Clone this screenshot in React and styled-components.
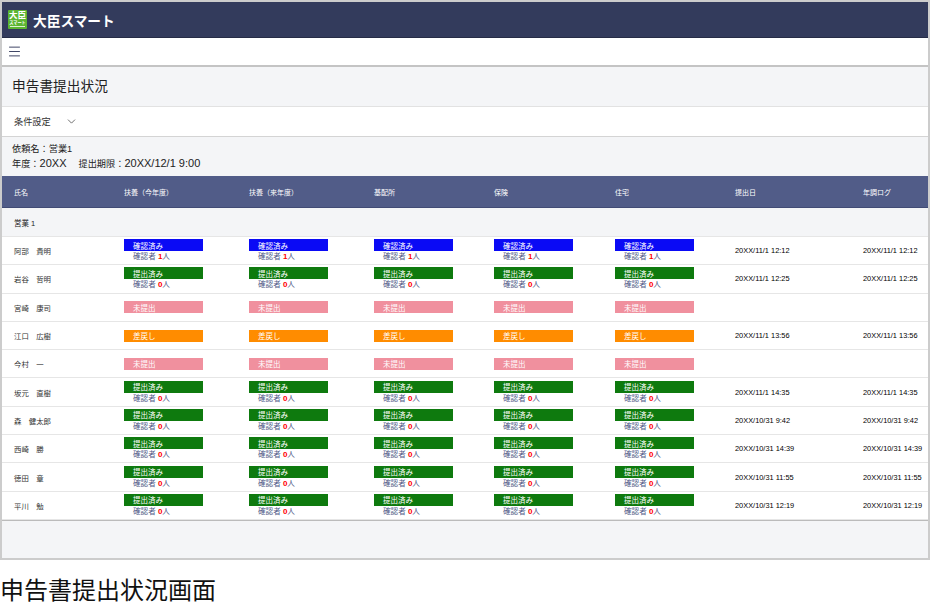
import styled, { createGlobalStyle } from 'styled-components'
import { Menu, ChevronDown } from 'lucide-react'

const GRID = '110px 125px 125px 120px 121px 120px 128px 65px'

const STATUS = {
    done: { label: '確認済み', color: '#0A0AF5', count: 1 },
    sent: { label: '提出済み', color: '#0E7A0E', count: 0 },
    none: { label: '未提出', color: '#F0909E' },
    back: { label: '差戻し', color: '#FF8C00' },
}

const COLUMNS = ['氏名', '扶養（今年度）', '扶養（来年度）', '基配所', '保険', '住宅', '提出日', '年調ログ']

const ROWS = [
    { name: '阿部　貴明', status: 'done', date: '20XX/11/1 12:12' },
    { name: '岩谷　哲明', status: 'sent', date: '20XX/11/1 12:25' },
    { name: '宮崎　康司', status: 'none', date: '' },
    { name: '江口　広樹', status: 'back', date: '20XX/11/1 13:56' },
    { name: '今村　一', status: 'none', date: '' },
    { name: '坂元　直樹', status: 'sent', date: '20XX/11/1 14:35' },
    { name: '森　健太郎', status: 'sent', date: '20XX/10/31 9:42' },
    { name: '西崎　勝', status: 'sent', date: '20XX/10/31 14:39' },
    { name: '徳田　章', status: 'sent', date: '20XX/10/31 11:55' },
    { name: '平川　勉', status: 'sent', date: '20XX/10/31 12:19' },
]

function StatusCell({ status }) {
    const item = STATUS[status]
    return (
        <Cell>
            <Badge color={item.color}>{item.label}</Badge>
            {item.count !== undefined && (
                <Checker>確認者 <Count>{item.count}</Count>人</Checker>
            )}
        </Cell>
    )
}

export default function App() {
    return (
        <>
            <GlobalStyle />
            <Frame>
                <Header>
                    <Logo>
                        <LogoMain>大臣</LogoMain>
                        <LogoSub>スマート</LogoSub>
                        <LogoBar />
                    </Logo>
                    <Brand>大臣スマート</Brand>
                </Header>
                <Nav>
                    <Menu size={15} strokeWidth={1.5} color="#333B5C" />
                </Nav>
                <TitleBar>申告書提出状況</TitleBar>
                <Filter>
                    条件設定
                    <ChevronDown size={13} strokeWidth={1.4} color="#444444" />
                </Filter>
                <Info>
                    <div>依頼名：営業1</div>
                    <div>
                        年度：<Latin>20XX</Latin>
                        <Deadline>提出期限：<Latin>20XX/12/1 9:00</Latin></Deadline>
                    </div>
                </Info>
                <TableHead>
                    {COLUMNS.map((col) => <span key={col}>{col}</span>)}
                </TableHead>
                <GroupRow>営業 1</GroupRow>
                {ROWS.map((row) => (
                    <Row key={row.name}>
                        <Name>{row.name}</Name>
                        {[0, 1, 2, 3, 4].map((i) => <StatusCell key={i} status={row.status} />)}
                        <DateText>{row.date}</DateText>
                        <DateText>{row.date}</DateText>
                    </Row>
                ))}
                <Bottom />
            </Frame>
            <Caption>申告書提出状況画面</Caption>
        </>
    )
}

const GlobalStyle = createGlobalStyle`
    body {
        margin: 0;
        background-color: #FFFFFF;
        overflow: hidden;
        font-family: "Liberation Sans", "Noto Sans CJK JP", sans-serif;
        color: #222222;
    }
`

const Frame = styled.div`
    display: flex;
    flex-direction: column;
    width: 930px;
    height: 560px;
    box-sizing: border-box;
    border: 2px solid #CCCCCC;
`

const Header = styled.div`
    display: flex;
    align-items: center;
    gap: 6px;
    height: 35px;
    padding-left: 6px;
    background-color: #333B5C;
    border-bottom: 1px solid #262C46;
`

const Logo = styled.div`
    display: flex;
    flex-direction: column;
    align-items: center;
    width: 19px;
    height: 19px;
    padding-top: 1px;
    box-sizing: border-box;
    background-color: #5CB531;
    border-radius: 1px;
    color: #FFFFFF;
    overflow: hidden;
`

const LogoMain = styled.span`
    font-size: 8.5px;
    line-height: 9px;
    font-weight: 700;
    white-space: nowrap;
`

const LogoSub = styled.span`
    font-size: 4.2px;
    line-height: 5px;
    font-weight: 700;
    white-space: nowrap;
`

const LogoBar = styled.div`
    width: 15px;
    height: 1px;
    margin-top: 1px;
    background-color: #DDF0D0;
`

const Brand = styled.span`
    color: #FFFFFF;
    font-size: 13.7px;
    font-weight: 700;
`

const Nav = styled.div`
    display: flex;
    align-items: center;
    height: 27px;
    padding-left: 4.5px;
    background-color: #FFFFFF;
    border-bottom: 2px solid #C4C4C4;
`

const TitleBar = styled.div`
    display: flex;
    align-items: center;
    height: 36px;
    padding: 0 0 3px 10px;
    background-color: #F4F5F7;
    border-bottom: 1px solid #E2E2E2;
    font-size: 13.7px;
`

const Filter = styled.div`
    display: flex;
    align-items: center;
    gap: 14px;
    height: 28px;
    padding: 0 0 1px 12px;
    background-color: #FFFFFF;
    border-bottom: 1px solid #D4D4D4;
    font-size: 9.2px;
    color: #333333;
`

const Info = styled.div`
    display: flex;
    flex-direction: column;
    justify-content: center;
    height: 39px;
    padding-left: 10px;
    background-color: #F4F5F7;
    font-size: 9.2px;
    line-height: 14px;
`

const Latin = styled.span`
    font-size: 11px;
`

const Deadline = styled.span`
    margin-left: 12px;
`

const TableHead = styled.div`
    display: grid;
    grid-template-columns: ${GRID};
    align-items: center;
    height: 31px;
    padding-left: 12px;
    background-color: #515C88;
    border-bottom: 1px solid #414B75;
    color: #FFFFFF;
    font-size: 7px;
    white-space: nowrap;
`

const GroupRow = styled.div`
    display: flex;
    align-items: center;
    height: 28px;
    padding-left: 12px;
    background-color: #F4F5F7;
    border-bottom: 1px solid #E6E6E6;
    font-size: 7.5px;
`

const Row = styled.div`
    display: grid;
    grid-template-columns: ${GRID};
    align-items: center;
    height: 28.3px;
    box-sizing: border-box;
    padding-left: 12px;
    background-color: #FFFFFF;
    border-bottom: 1px solid #E6E6E6;
`

const Name = styled.span`
    font-size: 7.4px;
    color: #333333;
`

const Cell = styled.div`
    display: flex;
    flex-direction: column;
    gap: 1px;
`

const Badge = styled.div`
    display: flex;
    align-items: center;
    width: 79px;
    height: 12px;
    box-sizing: border-box;
    padding-left: 9px;
    background-color: ${(props) => props.color};
    color: #FFFFFF;
    font-size: 7.5px;
`

const Checker = styled.div`
    padding-left: 9px;
    color: #515C88;
    font-size: 7.6px;
    line-height: 10px;
    white-space: nowrap;
`

const Count = styled.span`
    color: #FF0000;
    font-size: 8px;
    font-weight: 700;
`

const DateText = styled.span`
    color: #000000;
    font-size: 7.4px;
    white-space: nowrap;
`

const Bottom = styled.div`
    flex: 1;
    background-color: #F4F5F7;
    border-top: 1px solid #BBBBBB;
`

const Caption = styled.div`
    margin-top: 16px;
    font-size: 24px;
    line-height: 30px;
    color: #111111;
    white-space: nowrap;
`
